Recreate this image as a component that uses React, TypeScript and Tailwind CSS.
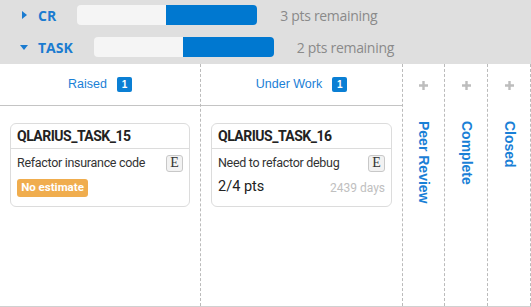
import React from 'react'

// Top swimlane summaries
const lanes = [
  { name: 'CR', open: false, remaining: 3 },
  { name: 'TASK', open: true, remaining: 2 },
]

const Badge = ({ n }: { n: number }) => (
  <span className="w-[15px] h-[15px] rounded-[2px] bg-[#0a7fd4] text-white text-[10px] font-bold flex items-center justify-center font-['Liberation_Sans',sans-serif]">
    {n}
  </span>
)

const EButton = () => (
  <span className="w-[17px] h-[17px] border border-[#c8c8c8] rounded-[3px] bg-[#f2f2f2] flex items-center justify-center text-[14px] leading-none text-[#333] font-['Liberation_Serif',serif]">
    E
  </span>
)

const Card = ({ title, desc, children }: { title: string; desc: string; children: React.ReactNode }) => (
  <div className="mt-[17px] mx-[10px] h-[84px] border border-[#dcdcdc] rounded-[6px] bg-white font-['Roboto',sans-serif]">
    <div className="h-[25px] border-b border-[#dcdcdc] px-[6px] flex items-center text-[14px] font-bold text-[#222] tracking-[-0.5px]">
      {title}
    </div>
    <div className="px-[6px] pt-[5px]">
      <div className="flex items-center justify-between h-[18px]">
        <span className="text-[12.5px] text-[#333] tracking-[-0.3px]">{desc}</span>
        <EButton />
      </div>
      {children}
    </div>
  </div>
)

const NarrowCol = ({ label, last }: { label: string; last?: boolean }) => (
  <div className={`${last ? 'w-[43px]' : 'w-[42px]'} border-r border-dashed border-[#bbb] flex flex-col items-center`}>
    <div className="h-[42px] flex items-center justify-center">
      <svg width="9" height="9" viewBox="0 0 9 9">
        <path d="M4.5 0v9M0 4.5h9" stroke="#bdbdbd" strokeWidth="2.4" />
      </svg>
    </div>
    <span className="mt-[15px] [writing-mode:vertical-rl] text-[14px] font-bold text-[#1a80d6] font-['Liberation_Sans',sans-serif]">
      {label}
    </span>
  </div>
)

export default function App() {
  return (
    <div className="w-[531px] h-[307px] bg-white font-['Open_Sans',sans-serif] overflow-hidden">
      <div className="h-16 bg-[#dfdfdf] pt-[5px] flex flex-col gap-[12px]">
        {lanes.map((l) => (
          <div key={l.name} className="h-5 flex items-center">
            <div className="w-[38px] flex justify-end pr-[11px]">
              {l.open ? (
                <span className="mr-[-1px] w-0 h-0 border-x-[4px] border-x-transparent border-t-[5px] border-t-[#1a7bd0]" />
              ) : (
                <span className="w-0 h-0 border-y-[4px] border-y-transparent border-l-[5px] border-l-[#1a7bd0]" />
              )}
            </div>
            <span className="text-[14px] font-bold text-[#1a7bd0]">{l.name}</span>
            <div className="ml-[21px] w-[180px] h-5 rounded-[4px] overflow-hidden flex">
              <div className="w-[89px] bg-[#f5f5f5]" />
              <div className="flex-1 bg-[#0078d0]" />
            </div>
            <span className="ml-[23px] text-[14px] text-[#8a8a8a] tracking-[-0.3px]">{l.remaining} pts remaining</span>
          </div>
        ))}
      </div>

      <div className="h-[243px] flex border-b border-[#d0d0d0]">
        <div className="w-[201px] border-r border-dashed border-[#bbb]">
          <div className="h-[42px] border-b border-[#c4c4c4] flex items-center justify-center gap-[10px] font-['Liberation_Sans',sans-serif] text-[12.5px] text-[#1a80d6]">
            Raised <Badge n={1} />
          </div>
          <Card title="QLARIUS_TASK_15" desc="Refactor insurance code">
            <div className="mt-[7px] w-[71px] h-[18px] rounded-[3px] bg-[#f0ad4e] text-white text-[11.5px] font-bold flex items-center justify-center">
              No estimate
            </div>
          </Card>
        </div>
        <div className="w-[202px] border-r border-dashed border-[#bbb]">
          <div className="h-[42px] border-b border-[#c4c4c4] flex items-center justify-center gap-[10px] font-['Liberation_Sans',sans-serif] text-[12.5px] text-[#1a80d6]">
            Under Work <Badge n={1} />
          </div>
          <Card title="QLARIUS_TASK_16" desc="Need to refactor debug">
            <div className="mt-[5px] flex items-end justify-between">
              <span className="text-[14.5px] text-[#222] leading-[20px]">2/4 pts</span>
              <span className="text-[12px] text-[#c0c0c0] leading-[18px]">2439 days</span>
            </div>
          </Card>
        </div>
        <NarrowCol label="Peer Review" />
        <NarrowCol label="Complete" last />
        <NarrowCol label="Closed" last />
      </div>
    </div>
  )
}
